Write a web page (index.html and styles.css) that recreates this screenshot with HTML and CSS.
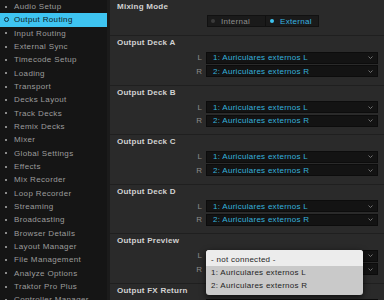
FILE: index.html
```html
<!DOCTYPE html>
<html>
<head>
<meta charset="utf-8">
<link rel="stylesheet" href="styles.css">
</head>
<body>
<div class="app">
  <nav class="sidebar">
    <div class="item">Audio Setup</div>
    <div class="item sel">Output Routing</div>
    <div class="item">Input Routing</div>
    <div class="item">External Sync</div>
    <div class="item">Timecode Setup</div>
    <div class="item">Loading</div>
    <div class="item">Transport</div>
    <div class="item">Decks Layout</div>
    <div class="item">Track Decks</div>
    <div class="item">Remix Decks</div>
    <div class="item">Mixer</div>
    <div class="item">Global Settings</div>
    <div class="item">Effects</div>
    <div class="item">Mix Recorder</div>
    <div class="item">Loop Recorder</div>
    <div class="item">Streaming</div>
    <div class="item">Broadcasting</div>
    <div class="item">Browser Details</div>
    <div class="item">Layout Manager</div>
    <div class="item">File Management</div>
    <div class="item">Analyze Options</div>
    <div class="item">Traktor Pro Plus</div>
    <div class="item">Controller Manager</div>
  </nav>
  <main class="panel">
    <section class="sec mix">
      <h2>Mixing Mode</h2>
      <div class="seg">
        <span class="opt"><i class="dot"></i>Internal</span>
        <span class="opt on"><i class="dot"></i>External</span>
      </div>
    </section>

    <section class="sec deck">
      <h2>Output Deck A</h2>
      <div class="row"><span class="ch">L</span><div class="dd"><span class="val">1: Auriculares externos L</span><svg class="chev" width="5" height="3" viewBox="0 0 5 3"><path d="M0.5 0.5 L2.5 2.5 L4.5 0.5" fill="none" stroke="#7a7a7a" stroke-width="0.9"/></svg></div></div>
      <div class="row"><span class="ch">R</span><div class="dd"><span class="val">2: Auriculares externos R</span><svg class="chev" width="5" height="3" viewBox="0 0 5 3"><path d="M0.5 0.5 L2.5 2.5 L4.5 0.5" fill="none" stroke="#7a7a7a" stroke-width="0.9"/></svg></div></div>
    </section>

    <section class="sec deck">
      <h2>Output Deck B</h2>
      <div class="row"><span class="ch">L</span><div class="dd"><span class="val">1: Auriculares externos L</span><svg class="chev" width="5" height="3" viewBox="0 0 5 3"><path d="M0.5 0.5 L2.5 2.5 L4.5 0.5" fill="none" stroke="#7a7a7a" stroke-width="0.9"/></svg></div></div>
      <div class="row"><span class="ch">R</span><div class="dd"><span class="val">2: Auriculares externos R</span><svg class="chev" width="5" height="3" viewBox="0 0 5 3"><path d="M0.5 0.5 L2.5 2.5 L4.5 0.5" fill="none" stroke="#7a7a7a" stroke-width="0.9"/></svg></div></div>
    </section>

    <section class="sec deck">
      <h2>Output Deck C</h2>
      <div class="row"><span class="ch">L</span><div class="dd"><span class="val">1: Auriculares externos L</span><svg class="chev" width="5" height="3" viewBox="0 0 5 3"><path d="M0.5 0.5 L2.5 2.5 L4.5 0.5" fill="none" stroke="#7a7a7a" stroke-width="0.9"/></svg></div></div>
      <div class="row"><span class="ch">R</span><div class="dd"><span class="val">2: Auriculares externos R</span><svg class="chev" width="5" height="3" viewBox="0 0 5 3"><path d="M0.5 0.5 L2.5 2.5 L4.5 0.5" fill="none" stroke="#7a7a7a" stroke-width="0.9"/></svg></div></div>
    </section>

    <section class="sec deck">
      <h2>Output Deck D</h2>
      <div class="row"><span class="ch">L</span><div class="dd"><span class="val">1: Auriculares externos L</span><svg class="chev" width="5" height="3" viewBox="0 0 5 3"><path d="M0.5 0.5 L2.5 2.5 L4.5 0.5" fill="none" stroke="#7a7a7a" stroke-width="0.9"/></svg></div></div>
      <div class="row"><span class="ch">R</span><div class="dd"><span class="val">2: Auriculares externos R</span><svg class="chev" width="5" height="3" viewBox="0 0 5 3"><path d="M0.5 0.5 L2.5 2.5 L4.5 0.5" fill="none" stroke="#7a7a7a" stroke-width="0.9"/></svg></div></div>
    </section>

    <section class="sec deck">
      <h2>Output Preview</h2>
      <div class="row"><span class="ch">L</span><div class="dd open"><span class="val"></span><svg class="chev" width="5" height="3" viewBox="0 0 5 3"><path d="M0.5 0.5 L2.5 2.5 L4.5 0.5" fill="none" stroke="#7a7a7a" stroke-width="0.9"/></svg>
        <div class="popup">
          <div class="pop-item hl">- not connected -</div>
          <div class="pop-item">1: Auriculares externos L</div>
          <div class="pop-item">2: Auriculares externos R</div>
        </div>
      </div></div>
      <div class="row"><span class="ch">R</span><div class="dd"><span class="val"></span><svg class="chev" width="5" height="3" viewBox="0 0 5 3"><path d="M0.5 0.5 L2.5 2.5 L4.5 0.5" fill="none" stroke="#7a7a7a" stroke-width="0.9"/></svg></div></div>
    </section>

    <section class="sec deck">
      <h2>Output FX Return</h2>
      <div class="row"><span class="ch">L</span><div class="dd"><span class="val"></span><svg class="chev" width="5" height="3" viewBox="0 0 5 3"><path d="M0.5 0.5 L2.5 2.5 L4.5 0.5" fill="none" stroke="#7a7a7a" stroke-width="0.9"/></svg></div></div>
    </section>
  </main>
</div>
</body>
</html>
```

FILE: styles.css
```css
html, body {
  margin: 0;
  padding: 0;
  height: 300px;
  overflow: hidden;
  background: #2a2a2a;
}

.app {
  display: flex;
  height: 300px;
  font-family: "Liberation Sans", Arial, sans-serif;
  font-size: 8px;
}

.sidebar {
  flex: none;
  width: 107px;
  background: #151515;
  border-right: 3px solid #1b1b1b;
}

.item {
  height: 13.33px;
  display: flex;
  align-items: center;
  padding-left: 5px;
  color: #9c9c9c;
  letter-spacing: 0.35px;
  white-space: nowrap;
}

.item::before {
  content: "";
  flex: none;
  width: 2px;
  height: 2px;
  background: #8a8a8a;
  margin-right: 7px;
}

.item.sel {
  background: #3ec4f1;
  color: #0f1a20;
}

.item.sel::before {
  width: 3px;
  height: 3px;
  background: transparent;
  border: 1px solid #103040;
  border-radius: 50%;
  margin-left: -1px;
  margin-right: 5px;
}

.panel {
  flex: 1;
  min-width: 0;
}

.sec {
  box-sizing: border-box;
  border-bottom: 1px solid #1f1f1f;
  padding: 2px 6px 0 7px;
}

.sec h2 {
  margin: 0;
  font-size: 8px;
  line-height: 10px;
  font-weight: bold;
  color: #d2d2d2;
  letter-spacing: 0.25px;
}

.mix {
  height: 36px;
  padding-top: 1.5px;
}

.deck {
  height: 49.5px;
}

.seg {
  display: flex;
  width: 112px;
  height: 12px;
  box-sizing: border-box;
  margin: 3.5px 0 0 90px;
  background: #1a1a1a;
  border: 1px solid #111;
}

.opt {
  display: flex;
  align-items: center;
  color: #8e8e8e;
  letter-spacing: 0.3px;
  padding-left: 3px;
}

.opt:first-child {
  width: 54px;
  border-right: 1px solid #101010;
}

.opt .dot {
  flex: none;
  display: block;
  width: 4px;
  height: 4px;
  border-radius: 50%;
  background: #3a3a3a;
  margin-right: 6px;
}

.opt.on {
  color: #38b5e0;
  padding-left: 4px;
}

.opt.on .dot {
  background: #3ec4f1;
}

.row {
  display: flex;
  align-items: center;
  justify-content: flex-end;
  height: 12px;
  margin-top: 1.5px;
}

.sec h2 + .row {
  margin-top: 3.5px;
}

.ch {
  color: #8a8a8a;
  margin-right: 4px;
}

.dd {
  position: relative;
  box-sizing: border-box;
  width: 172px;
  height: 12px;
  display: flex;
  align-items: center;
  justify-content: space-between;
  background: #131313;
  border: 1px solid #0c0c0c;
  padding: 0 4px 0 6px;
}

.dd.open {
  z-index: 5;
}

.val {
  color: #35b1dc;
  letter-spacing: 0.28px;
  white-space: nowrap;
}

.popup {
  position: absolute;
  left: -1px;
  top: -0.5px;
  z-index: 10;
  width: 157px;
  background: #c9c9c9;
  border-radius: 3px;
  box-shadow: 0 2px 6px rgba(0, 0, 0, 0.7);
  padding-bottom: 3px;
  overflow: hidden;
}

.pop-item {
  height: 13.3px;
  line-height: 13.3px;
  padding-left: 5px;
  color: #1f1f1f;
  letter-spacing: 0.28px;
  white-space: nowrap;
}

.pop-item.hl {
  background: #ececec;
  padding-top: 2.5px;
}
```
